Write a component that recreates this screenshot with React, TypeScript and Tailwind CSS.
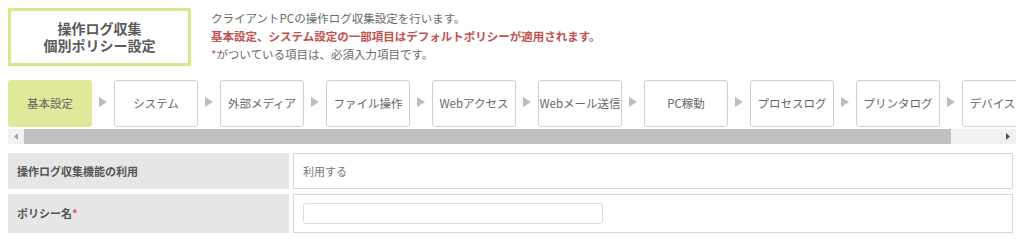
const tabs = [
  '基本設定',
  'システム',
  '外部メディア',
  'ファイル操作',
  'Webアクセス',
  'Webメール送信',
  'PC稼動',
  'プロセスログ',
  'プリンタログ',
  'デバイスログ',
]

function Arrow() {
  return (
    <svg width="8" height="10" viewBox="0 0 8 10" className="shrink-0">
      <path d="M0 0 L8 5 L0 10 Z" fill="#bdbdbd" />
    </svg>
  )
}

export default function App() {
  return (
    <div
      className="bg-white p-2 text-[#555]"
      style={{ fontFamily: '"Noto Sans CJK JP", "Noto Sans", sans-serif' }}
    >
      <div className="flex items-start">
        <div className="w-[183px] h-[58px] border-[3px] border-[#d8e78a] flex flex-col items-center justify-center text-[14px] font-bold leading-[17px] text-[#5a5a5a]">
          <div>操作ログ収集</div>
          <div>個別ポリシー設定</div>
        </div>
        <div className="ml-5 pt-px text-[11.5px] leading-[18px] text-[#6a6a6a]">
          <div>クライアントPCの操作ログ収集設定を行います。</div>
          <div className="font-bold text-[#c2514f]">
            基本設定、システム設定の一部項目はデフォルトポリシーが適用されます。
          </div>
          <div>
            <span className="text-[#c2514f]">*</span>がついている項目は、必須入力項目です。
          </div>
        </div>
      </div>

      <div className="mt-[14px] w-[1008px] overflow-hidden">
        <div className="flex items-center">
          {tabs.map((t, i) => (
            <div key={t} className="flex items-center shrink-0">
              {i > 0 && (
                <div className="w-[22px] flex justify-center pb-[3px]">
                  <Arrow />
                </div>
              )}
              <div
                className={
                  i === 0
                    ? 'w-[84px] h-[47px] rounded-[3px] bg-[#e0e99a] flex items-center justify-center text-[11.5px] text-[#666] whitespace-nowrap'
                    : 'w-[84px] h-[47px] rounded-[3px] border border-[#cfcfcf] bg-white flex items-center justify-center text-[11.5px] text-[#666] whitespace-nowrap overflow-hidden'
                }
              >
                {t}
              </div>
            </div>
          ))}
        </div>
        <div className="mt-[2px] h-[15px] bg-[#f1f1f1] flex items-center">
          <div className="w-4 flex justify-center">
            <svg width="4" height="7" viewBox="0 0 4 7">
              <path d="M4 0 L0 3.5 L4 7 Z" fill="#a3a3a3" />
            </svg>
          </div>
          <div className="w-[927px] h-[15px] bg-[#c1c1c1]" />
          <div className="flex-1" />
          <div className="w-4 flex justify-center">
            <svg width="4" height="7" viewBox="0 0 4 7">
              <path d="M0 0 L4 3.5 L0 7 Z" fill="#505050" />
            </svg>
          </div>
        </div>
      </div>

      <div className="mt-[9px] grid grid-cols-[281px_720px] gap-x-1 gap-y-[5px] text-[11px]">
        <div className="h-[36px] bg-[#e6e6e6] flex items-center pl-[9px] font-bold text-[#555]">
          操作ログ収集機能の利用
        </div>
        <div className="h-[36px] border border-[#d6d6d6] flex items-center pl-[9px] text-[#777]">
          利用する
        </div>
        <div className="h-[39px] bg-[#e6e6e6] flex items-center pl-[9px] font-bold text-[#555]">
          ポリシー名<span className="text-[#d05a5a]">*</span>
        </div>
        <div className="h-[39px] border border-[#d6d6d6] flex items-center pl-[9px]">
          <input
            type="text"
            className="w-[300px] h-[21px] border border-[#dcdcdc] rounded-[3px] outline-none px-1"
          />
        </div>
      </div>
    </div>
  )
}
